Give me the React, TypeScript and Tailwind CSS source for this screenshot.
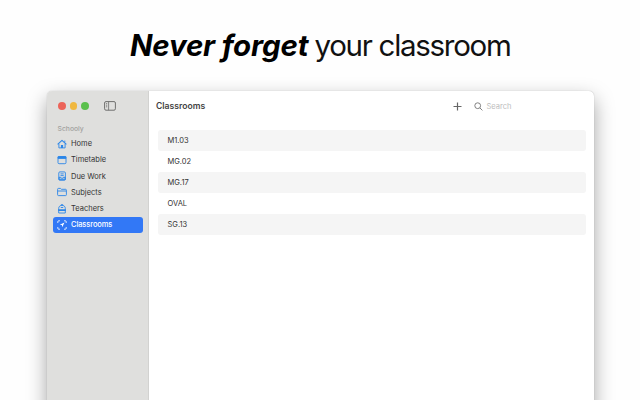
import React, { useState } from 'react';

const rooms = ['M1.03', 'MG.02', 'MG.17', 'OVAL', 'SG.13'];

const HomeIcon = () => (
  <>
    <path d="M.6 5.3 5 1.3l4.4 4" strokeWidth="1.1" />
    <path d="M1.9 4.8v4.1h6.2V4.8" />
    <path d="M3.9 8.9V6h2.2v2.900z" fill="currentColor" stroke="none" />
    <path d="M7.8 1.6v1.8" />
  </>
);

const TimetableIcon = () => (
  <>
    <rect x="1" y="1.5" width="8" height="7.2" rx="1.1" />
    <path d="M1.1 1.7h7.8v1.7H1.1z" fill="currentColor" />
  </>
);

const DueWorkIcon = () => (
  <>
    <rect x="1.8" y="0.9" width="6.6" height="8.3" rx="1.1" />
    <path d="M3.5 2.9h3.2M3.5 4.6h3.2" />
    <path d="M2 6.3h1.8l.6.9h1.4l.6-.9h1.8v2.4H2z" fill="currentColor" fillOpacity="0.35" />
  </>
);

const SubjectsIcon = () => (
  <>
    <path d="M.6 7.7V2.3c0-.6.3-.9.9-.9h1.9l1 .9h4.1c.6 0 .9.3.9.9v4.5c0 .6-.3.9-.9.9h-7c-.6 0-.9-.3-.9-.9z" />
    <path d="M.7 4h8.6" />
  </>
);

const TeachersIcon = () => (
  <>
    <path d="M1.700 9V4.500C1.700 2.500 3 1.400 5 1.400s3.300 1.100 3.300 3.100V9z" />
    <path d="M3.800 1.500c0-1.400 2.400-1.400 2.400 0" />
    <path d="M1.200 5.200h7.600v1.900H1.200z" fill="currentColor" stroke="none" />
    <path d="M3.800 3.500h2.400" />
  </>
);

const ClassroomsIcon = () => (
  <>
    <path d="M.8 2.9V1.7c0-.5.3-.9.9-.9h1.200M7.100.8h1.200c.6 0 .9.4.9.900v1.200M9.200 7.100v1.200c0 .5-.3.9-.9.9H7.100M2.900 9.200H1.700c-.6 0-.9-.4-.9-.9V7.100" />
    <path d="M7.500 2.500 2.700 4.800l2.200.3.300 2.200z" fill="currentColor" stroke="none" />
  </>
);

const sections = [
  { label: 'Home', Icon: HomeIcon },
  { label: 'Timetable', Icon: TimetableIcon },
  { label: 'Due Work', Icon: DueWorkIcon },
  { label: 'Subjects', Icon: SubjectsIcon },
  { label: 'Teachers', Icon: TeachersIcon },
  { label: 'Classrooms', Icon: ClassroomsIcon },
];

const App: React.FC = () => {
  const [active, setActive] = useState('Classrooms');

  return (
    <div className="flex h-[400px] w-[640px] flex-col overflow-hidden bg-[#fefefe] font-['Inter',sans-serif]">
      <h1 className="flex h-[91px] shrink-0 items-start whitespace-nowrap pl-[130px] pt-[26px] text-[29.5px] leading-[38px] text-black">
        <span className="w-[184.5px] font-bold italic tracking-[-0.2px]">Never forget</span>
        <span className="tracking-[-1.29px] text-[#111]">your classroom</span>
      </h1>

      <div className="ml-[47px] flex h-[360px] w-[547px] shrink-0 overflow-hidden rounded-[5px] bg-white shadow-[0_8px_20px_rgba(0,0,0,0.36),0_0_1px_rgba(0,0,0,0.3)]">
        <aside className="w-[102px] shrink-0 border-r border-[#d2d2d0] bg-[#dfdfdd]">
          <div className="flex h-[30px] items-center pl-[11px]">
            <div className="flex gap-[4.2px]">
              <span className="size-[7.5px] rounded-full bg-[#ec6459]" />
              <span className="size-[7.5px] rounded-full bg-[#f0b840]" />
              <span className="size-[7.5px] rounded-full bg-[#5bc04d]" />
            </div>
            <svg className="ml-[15.1px] h-[10px] w-[12px] text-[#70706e]" viewBox="0 0 12 10" fill="none" stroke="currentColor">
              <rect x="0.6" y="0.6" width="10.8" height="8.6" rx="1.4" />
              <path d="M4.6.8v8.400M2 2.600h1.200M2 4.200h1.200M2 5.800h1.200" strokeWidth="0.8" />
            </svg>
          </div>
          <p className="mt-[2px] pl-[10.5px] text-[6.8px] font-medium leading-[11px] text-[#a3a3a1]">Schooly</p>
          <nav className="mt-[1.4px] flex flex-col pl-[5.5px] pr-[5px]">
            {sections.map(({ label, Icon }) => (
              <button
                key={label}
                onClick={() => setActive(label)}
                className={`flex h-[16.3px] items-center gap-[4px] rounded-[3px] pl-[4.5px] text-left text-[7.5px] ${active === label ? 'bg-[#3278f6] font-medium tracking-[-0.1px] text-white' : 'text-[#333]'}`}
              >
                <svg
                  className={`size-[10px] shrink-0 ${active === label ? 'text-white' : 'text-[#2b86e8]'}`}
                  viewBox="0 0 10 10"
                  fill="none"
                  stroke="currentColor"
                  strokeWidth="0.9"
                  strokeLinejoin="round"
                >
                  <Icon />
                </svg>
                {label}
              </button>
            ))}
          </nav>
        </aside>

        <main className="min-w-0 flex-1">
          <header className="flex h-[30px] items-center pl-[7px]">
            <h2 className="flex-1 text-[8.6px] font-semibold text-[#414141]">Classrooms</h2>
            <svg className="size-[9px] text-[#666]" viewBox="0 0 9 9" stroke="currentColor" strokeWidth="1.2">
              <path d="M4.5.5v8M.5 4.500h8" />
            </svg>
            <div className="ml-[12px] flex w-[120px] items-center">
              <svg className="size-[9px] text-[#808080]" viewBox="0 0 9 9" fill="none" stroke="currentColor">
                <circle cx="3.7" cy="3.7" r="2.9" />
                <path d="m5.900 5.900 2.500 2.500" />
              </svg>
              <span className="ml-[3.5px] pt-[2px] text-[7.5px] text-[#bcbcbc]">Search</span>
            </div>
          </header>
          <ul className="mt-[9px] pl-[9px] pr-[8px]">
            {rooms.map((room) => (
              <li key={room} className="flex h-[21px] items-center rounded-[3px] pl-[9.5px] text-[7.5px] text-[#333] odd:bg-[#f5f5f5]">
                {room}
              </li>
            ))}
          </ul>
        </main>
      </div>
    </div>
  );
};

export default App;
